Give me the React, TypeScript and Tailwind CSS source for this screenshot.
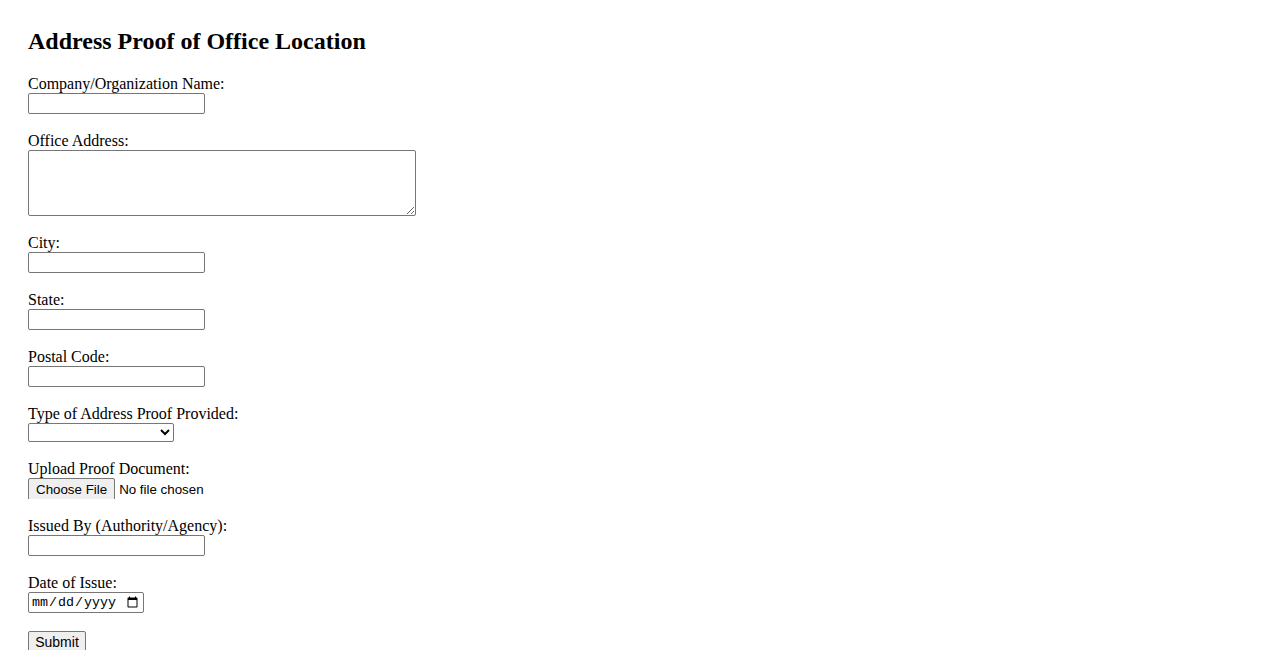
import React from "react";

const ctl = "block border border-[#767676] rounded-[2px] bg-white text-[13.333px] [font-family:Arial,'Liberation_Sans',sans-serif]";

function Field({ label, children }: { label: string; children: React.ReactNode }) {
  return (
    <div className="flex flex-col items-start">
      <label className="block leading-[18px]">{label}</label>
      {children}
    </div>
  );
}

export default function App() {
  return (
    <div className="min-h-[650px] bg-white text-black pl-[28px] pt-[28px] text-[16px] [font-family:'Liberation_Serif','Times_New_Roman',serif]">
      <h2 className="text-[24px] font-bold leading-[26px] mb-[21px]">Address Proof of Office Location</h2>
      <form className="flex flex-col gap-[18px]" onSubmit={(e) => e.preventDefault()}>
        <Field label="Company/Organization Name:">
          <input type="text" className={`${ctl} w-[177px] h-[21px] px-[2px]`} />
        </Field>
        <Field label="Office Address:">
          <textarea className={`${ctl} w-[388px] h-[66px] px-[2px]`} />
        </Field>
        <Field label="City:">
          <input type="text" className={`${ctl} w-[177px] h-[21px] px-[2px]`} />
        </Field>
        <Field label="State:">
          <input type="text" className={`${ctl} w-[177px] h-[21px] px-[2px]`} />
        </Field>
        <Field label="Postal Code:">
          <input type="text" className={`${ctl} w-[177px] h-[21px] px-[2px]`} />
        </Field>
        <Field label="Type of Address Proof Provided:">
          <select className={`${ctl} w-[146px] h-[19px]`} defaultValue="">
            <option value=""></option>
            <option value="utility">Utility Bill</option>
            <option value="lease">Lease Agreement</option>
          </select>
        </Field>
        <Field label="Upload Proof Document:">
          <input
            type="file"
            className="block h-[21px] text-[13.333px] [font-family:Arial,'Liberation_Sans',sans-serif] file:bg-[#efefef] file:border file:border-solid file:border-[#767676] file:rounded-[2px] file:px-[7px] file:py-[1px] file:mr-[4px] file:text-black"
          />
        </Field>
        <Field label="Issued By (Authority/Agency):">
          <input type="text" className={`${ctl} w-[177px] h-[21px] px-[2px]`} />
        </Field>
        <Field label="Date of Issue:">
          <input
            type="date"
            className="block w-[116px] h-[21px] border border-[#767676] rounded-[2px] bg-white text-[13.333px] px-[2px] [font-family:'Liberation_Mono','DejaVu_Sans_Mono',monospace]"
          />
        </Field>
        <div className="flex">
          <button
            type="submit"
            className="block w-[58px] h-[21px] bg-[#efefef] border border-[#767676] rounded-[2px] text-[14px] [font-family:Arial,'Liberation_Sans',sans-serif] leading-[18px] text-center"
          >
            Submit
          </button>
        </div>
      </form>
    </div>
  );
}
